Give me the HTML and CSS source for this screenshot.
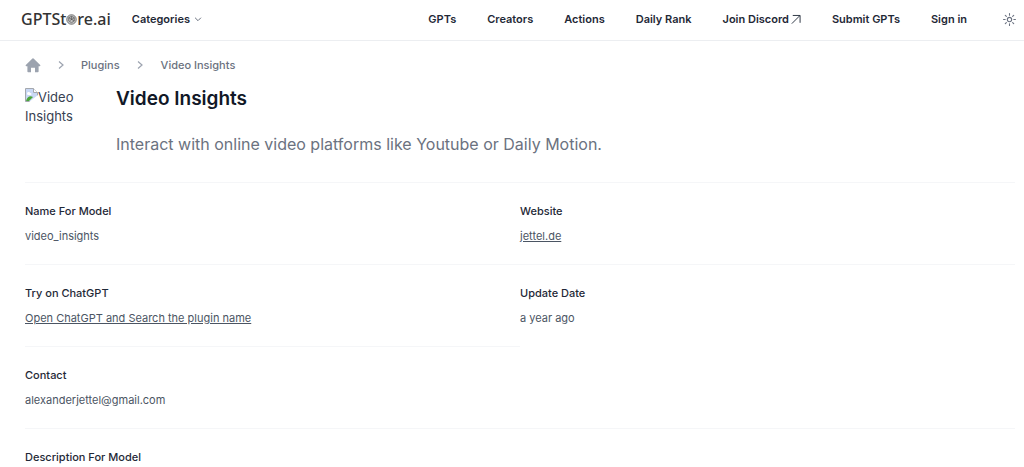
FILE: index.html
```html
<!DOCTYPE html>
<html lang="en">
<head>
<meta charset="utf-8">
<meta name="viewport" content="width=device-width, initial-scale=1">
<title>Video Insights - GPTStore.ai</title>
<link rel="stylesheet" href="styles.css">
</head>
<body>
<header class="topbar">
  <a class="logo" href="#" aria-label="GPTStore.ai"><span>GPTSt</span><svg class="logo-mark" viewBox="0 0 24 24" fill="none" stroke="currentColor" stroke-width="1.500" aria-hidden="true"><circle cx="12" cy="12" r="10.5" fill="#c4c4c4"/><path d="M6 8l6-3 6 3v7l-6 4-6-4zM6 8l12 7M18 8l-9 6M12 5v8"/></svg><span>re.ai</span></a>
  <button class="categories" type="button">Categories
    <svg class="caret" viewBox="0 0 24 24" fill="none" stroke="currentColor" stroke-width="3" stroke-linecap="round" stroke-linejoin="round" aria-hidden="true"><path d="M4 9l8 8 8-8"/></svg>
  </button>
  <nav class="nav" aria-label="Main">
    <a href="#">GPTs</a>
    <a href="#">Creators</a>
    <a href="#">Actions</a>
    <a href="#">Daily Rank</a>
    <a class="external" href="#">Join Discord<svg viewBox="0 0 12 12" fill="none" stroke="currentColor" stroke-width="1" aria-hidden="true"><path d="M2 10.500L10.500 2M3 1.600h8v8"/></svg></a>
    <a href="#">Submit GPTs</a>
    <a href="#">Sign in</a>
  </nav>
  <button class="theme" type="button" aria-label="Toggle theme">
    <svg viewBox="0 0 24 24" fill="none" stroke="currentColor" stroke-width="2" stroke-linecap="round" aria-hidden="true"><circle cx="12" cy="12" r="4"/><path d="M12 1v3M12 20v3M1 12h3M20 12h3M4.200 4.200l2 2M17.800 17.800l2 2M19.800 4.200l-2 2M6.200 17.800l-2 2"/></svg>
  </button>
</header>
<main class="page">
  <nav class="crumbs" aria-label="Breadcrumb">
    <a class="home" href="#" aria-label="Home"><svg viewBox="0 0 20 20" fill="currentColor" aria-hidden="true"><path d="M10.700 1.800a1 1 0 0 0-1.400 0l-8.300 8.200a.9.900 0 0 0 .7 1.500H3V18a1 1 0 0 0 1 1h3.500v-5.500h5V19H16a1 1 0 0 0 1-1v-6.500h1.300a.9.900 0 0 0 .7-1.500z"/></svg></a>
    <svg class="chevron" viewBox="0 0 8 8" fill="none" stroke="currentColor" stroke-width="1.200" aria-hidden="true"><path d="M2 .5L6 4 2 7.500"/></svg>
    <a href="#">Plugins</a>
    <svg class="chevron" viewBox="0 0 8 8" fill="none" stroke="currentColor" stroke-width="1.200" aria-hidden="true"><path d="M2 .5L6 4 2 7.500"/></svg>
    <a href="#" aria-current="page">Video Insights</a>
  </nav>
  <section class="intro">
    <div class="thumb"><svg viewBox="0 0 13 14" aria-hidden="true"><path d="M.5.500h8l4 4v9H.500z" fill="#c9d8f5" stroke="#a4a8ae"/><path d="M8.500.500v4h4" fill="#fff" stroke="#a4a8ae"/><path d="M2 5.500c0-2 3-2 3-.5 2 0 2 2 0 2H2.500z" fill="#fff"/><path d="M1 13c1-4 4-6 7-4l-4 4z" fill="#4aa53a"/><path d="M4 14l9-7v7z" fill="#fff"/></svg>Video Insights</div>
    <div class="summary">
      <h1>Video Insights</h1>
      <p>Interact with online video platforms like Youtube or Daily Motion.</p>
    </div>
  </section>
  <dl class="details">
    <div class="item"><dt>Name For Model</dt><dd>video_insights</dd></div>
    <div class="item"><dt>Website</dt><dd><a href="#">jettel.de</a></dd></div>
    <div class="item"><dt>Try on ChatGPT</dt><dd><a href="#">Open ChatGPT and Search the plugin name</a></dd></div>
    <div class="item"><dt>Update Date</dt><dd>a year ago</dd></div>
    <div class="item"><dt>Contact</dt><dd>alexanderjettel@gmail.com</dd></div>
    <div class="item wide"><dt>Description For Model</dt></div>
  </dl>
</main>
</body>
</html>
```

FILE: styles.css
```css
* { box-sizing: border-box; }
body {
  margin: 0;
  background: #fff;
  color: #1f2937;
  font-family: Inter, "Liberation Sans", sans-serif;
  font-size: 11px;
  line-height: 16px;
}
a { color: inherit; text-decoration: none; }
button {
  padding: 0;
  border: 0;
  background: none;
  color: inherit;
  font: inherit;
  cursor: pointer;
}
svg { display: block; flex: none; }

.topbar {
  display: flex;
  align-items: center;
  padding: 10px 8px 12px 21px;
  border-bottom: 1px solid #eceef1;
  font-weight: 600;
}
.logo {
  display: flex;
  align-items: center;
  color: #333;
  font-family: "Noto Sans", sans-serif;
  font-size: 16px;
  font-weight: 500;
  line-height: 18px;
}
.logo-mark { width: 11px; height: 11px; color: #555; }
.categories {
  display: flex;
  align-items: center;
  gap: 4px;
  margin-left: 21px;
}
.caret { width: 8px; height: 8px; color: #6b7280; }
.nav { display: flex; gap: 31px; margin-left: auto; }
.external { display: flex; align-items: center; gap: 1px; }
.external svg { width: 11px; height: 11px; }
.theme { margin-left: 36px; color: #6b7280; }
.theme svg { width: 13px; height: 13px; }

.page { padding: 16px 9px 0 25px; }
.crumbs {
  display: flex;
  align-items: center;
  gap: 16px;
  color: #6b7280;
  font-weight: 500;
}
.crumbs a[aria-current] { margin-left: 1px; }
.home { color: #9ca3af; }
.home svg { width: 16px; height: 16px; }
.chevron { width: 8px; height: 8px; color: #9ca3af; }

.intro { display: flex; gap: 26px; padding: 15px 0 26px; }
.thumb {
  width: 65px;
  color: #374151;
  font-size: 13px;
  line-height: 19px;
}
.thumb svg { display: inline-block; width: 13px; height: 14px; }
h1 { margin: 0; color: #111827; font-size: 19px; font-weight: 600; line-height: 22px; }
.summary p {
  margin: 22px 0 0;
  color: #6b7280;
  font-size: 16px;
  line-height: 24px;
}

.details { display: grid; grid-template-columns: 1fr 1fr; margin: 0; }
.item { padding: 20px 0; border-top: 1px solid #f5f6f8; }
.wide { grid-column: 1 / -1; padding-bottom: 0; }
dt { font-weight: 500; }
dd { margin: 9px 0 0; color: #4b5563; }
dd a { text-decoration: underline; }
```
